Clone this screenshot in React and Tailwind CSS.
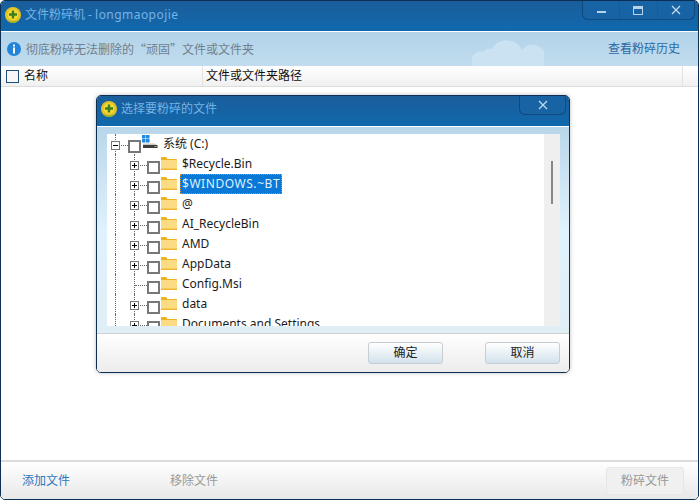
const cjk = "font-['Noto_Sans','Noto_Sans_CJK_SC',sans-serif]";

function Logo() {
  return (
    <svg width="16" height="16" viewBox="0 0 16 16" className="shrink-0">
      <circle cx="8" cy="8" r="8" fill="#e3c22a" />
      <path d="M1 11.5a8 8 0 0 0 14 0a8 6 0 0 1-14 0z" fill="#6fae2c" />
      <circle cx="8" cy="7.5" r="5.4" fill="#f6d92f" />
      <path d="M6.8 3.5h2.4v2.8H12v2.4H9.2v2.8H6.8V8.700H4V6.300h2.800z" fill="#3c7f22" />
    </svg>
  );
}

function Folder() {
  return (
    <svg width="16" height="13" viewBox="0 0 16 13" className="shrink-0">
      <path d="M0 1a1 1 0 0 1 1-1h4l1.500 2H15a1 1 0 0 1 1 1v9a1 1 0 0 1-1 1H1a1 1 0 0 1-1-1z" fill="#efb21c" />
      <rect x="0" y="3" width="16" height="10" rx="1" fill="#fbdc85" />
      <rect x="0" y="11.500" width="16" height="1.500" fill="#eeb72f" />
    </svg>
  );
}

function Drive() {
  return (
    <svg width="16" height="14" viewBox="0 0 16 14" className="shrink-0">
      <rect x="0" y="0" width="3.500" height="3.500" fill="#1e88e5" />
      <rect x="4" y="0" width="3.500" height="3.500" fill="#1e88e5" />
      <rect x="0" y="4" width="3.500" height="3.500" fill="#1e88e5" />
      <rect x="4" y="4" width="3.500" height="3.500" fill="#1e88e5" />
      <path d="M1 8.500h12l2 2H1z" fill="#c9c9c9" />
      <rect x="1" y="10" width="14.500" height="3" fill="#3d3d3d" />
      <rect x="12.500" y="11" width="2" height="1" fill="#7fd05a" />
    </svg>
  );
}

function Expander({ open }) {
  return (
    <span className="relative z-10 w-[9px] h-[9px] border border-[#777] bg-white flex items-center justify-center">
      <span className="absolute w-[5px] h-px bg-black" />
      {!open && <span className="absolute w-px h-[5px] bg-black" />}
    </span>
  );
}

function Check() {
  return <span className="block w-[13px] h-[13px] border-2 border-[#777] bg-white" />;
}

function TreeRow({ name, selected, leaf }) {
  return (
    <div className="relative h-5 flex">
      <span className="absolute left-[8px] top-0 h-5 border-l border-dotted border-[#666]" />
      <span className="absolute left-[27px] top-0 h-5 border-l border-dotted border-[#666]" />
      <span className="absolute left-[28px] top-[11px] w-[12px] border-t border-dotted border-[#666]" />
      <span className="absolute left-[23px] top-[7px]">{!leaf && <Expander />}</span>
      <span className="absolute left-[40px] top-[7px]"><Check /></span>
      <span className="absolute left-[54px] top-[3px]"><Folder /></span>
      <span
        className={`absolute left-[73px] top-0 h-5 px-[2px] leading-5 whitespace-nowrap text-xs ${
          selected ? 'w-[102px] tracking-[0.55px] bg-[#0a78d7] text-[#dff0ff] outline-1 outline-dotted outline-[#e08a1e] -outline-offset-1' : 'text-[#1b1b1b]'
        }`}
      >
        {name}
      </span>
    </div>
  );
}

const rows = [
  { name: '$Recycle.Bin' },
  { name: '$WINDOWS.~BT', selected: true },
  { name: '@' },
  { name: 'AI_RecycleBin' },
  { name: 'AMD' },
  { name: 'AppData' },
  { name: 'Config.Msi', leaf: true },
  { name: 'data' },
  { name: 'Documents and Settings' },
];

function Cloud({ className }) {
  return (
    <svg width="72" height="30" viewBox="0 0 72 30" className={className}>
      <path d="M0 30a10 10 0 0 1 12-14a6 6 0 0 1 8-3a16 14 0 0 1 30 1a12 12 0 0 1 21 16z" fill="#cbe2f2" />
    </svg>
  );
}

export default function App() {
  return (
    <div className={`relative w-[700px] h-[500px] bg-white overflow-hidden ${cjk}`}>
      <div className="w-[699px] h-[500px] border border-[#0d2f52] rounded-[5px] overflow-hidden flex flex-col bg-white">
        <div className="relative h-[30px] shrink-0 flex items-center gap-[4px] pl-[4px] pb-[2px] bg-gradient-to-b from-[#1a5d9a] to-[#0f69ad]">
          <Logo />
          <span className="text-xs text-[#74b3e6] whitespace-pre">文件粉碎机 - <span className="tracking-[0.45px]">longmaopojie</span></span>
          <div className="absolute right-[3px] top-0 w-[113px] h-[19px] flex border border-t-0 border-[#0e4a80] rounded-b-[6px] bg-[#1863a3]">
            <div className="flex-1 flex items-center justify-center border-r border-[#1a5b93]">
              <span className="w-[9px] h-[2px] bg-[#b7d3ea] mt-[3px]" />
            </div>
            <div className="flex-1 flex items-center justify-center border-r border-[#1a5b93]">
              <span className="w-[10px] h-[9px] border border-t-[3px] border-[#b7d3ea]" />
            </div>
            <div className="flex-1 flex items-center justify-center">
              <svg width="10" height="10" viewBox="0 0 10 10"><path d="M1 1l8 8M9 1l-8 8" stroke="#c3dcf0" strokeWidth="1.200" /></svg>
            </div>
          </div>
        </div>
        <div className="relative h-[35px] shrink-0 border-t border-white flex items-center justify-between pl-[6px] pr-[18px] bg-gradient-to-b from-[#b2d3e9] to-[#c1dcee]">
          <Cloud className="absolute left-[471px] top-[4px]" />
          <div className="relative flex items-center gap-[5px]">
            <svg width="14" height="14" viewBox="0 0 14 14" className="shrink-0">
              <circle cx="7" cy="7" r="7" fill="#2184d8" />
              <rect x="6" y="2.500" width="2" height="2" fill="#fff" />
              <rect x="6" y="5.500" width="2" height="6" fill="#fff" />
            </svg>
            <span className="text-xs text-[#6f7f8c]">
              彻底粉碎无法删除的<span className="font-['Noto_Sans_CJK_SC',sans-serif]">“顽固”</span>文件或文件夹
            </span>
          </div>
          <span className="relative text-xs text-[#2a68a6]">查看粉碎历史</span>
        </div>
        <div className="h-[21px] shrink-0 flex items-center bg-gradient-to-b from-white to-[#f0f0f0] border-b border-[#dcdcdc] text-xs text-[#111]">
          <div className="w-[202px] h-full flex items-center gap-[5px] pl-[5px] border-r border-[#e2e2e2]">
            <span className="block w-[13px] h-[13px] border border-[#1f4e79] bg-[#f7f7f7]" />
            <span>名称</span>
          </div>
          <div className="w-[480px] h-full flex items-center pl-[3px] border-r border-[#e2e2e2]">文件或文件夹路径</div>
        </div>
        <div className="flex-1" />
        <div className="h-[39px] shrink-0 flex items-center border-t-2 border-[#dcdcdc] bg-gradient-to-b from-white to-[#e8e8e8] text-xs pl-[21px] pr-[14px]">
          <span className="text-[#2b78c0] w-[148px]">添加文件</span>
          <span className="text-[#999]">移除文件</span>
          <div className="ml-auto w-[78px] h-[28px] flex items-center justify-center bg-[#f0f0f0] border border-[#e6e6e6] rounded-[3px] text-[#999]">粉碎文件</div>
        </div>
      </div>

      <div className="absolute left-[96px] top-[95px] w-[474px] h-[278px] border border-[#0d2f52] rounded-[5px] overflow-hidden flex flex-col shadow-[0_0_4px_rgba(0,0,0,0.25)]">
        <div className="relative h-[30px] shrink-0 flex items-center gap-[4px] pl-[4px] pb-[4px] bg-gradient-to-b from-[#1a5d9a] to-[#0f69ad]">
          <Logo />
          <span className="text-xs text-[#74b3e6]">选择要粉碎的文件</span>
          <div className="absolute right-[3px] top-0 w-[47px] h-[19px] flex items-center justify-center border border-t-0 border-[#0e4a80] rounded-b-[6px] bg-[#1863a3]">
            <svg width="10" height="10" viewBox="0 0 10 10"><path d="M1 1l8 8M9 1l-8 8" stroke="#c3dcf0" strokeWidth="1.200" /></svg>
          </div>
        </div>
        <div className="h-[207px] shrink-0 border-t border-white pt-[7px] pl-[10px] pr-[9px] bg-gradient-to-b from-[#b9d6ea] via-[#dff2fd] to-[#e0eef6]">
          <div className="h-[192px] flex bg-white overflow-hidden">
            <div className="w-[437px] overflow-hidden text-xs">
              <div className="relative h-5">
                <span className="absolute left-[8px] top-0 h-5 border-l border-dotted border-[#666]" />
                <span className="absolute left-[9px] top-[11px] w-[14px] border-t border-dotted border-[#666]" />
                <span className="absolute left-[4px] top-[7px]"><Expander open /></span>
                <span className="absolute left-[21px] top-[6px]"><Check /></span>
                <span className="absolute left-[35px] top-[1px]"><Drive /></span>
                <span className="absolute left-[56px] top-0 leading-5 whitespace-nowrap text-[#1b1b1b]">系统 (C:)</span>
              </div>
              {rows.map(r => <TreeRow key={r.name} {...r} />)}
            </div>
            <div className="w-[16px] bg-[#efefef] pt-[27px] flex justify-center">
              <span className="block w-[2px] h-[43px] bg-[#888]" />
            </div>
          </div>
        </div>
        <div className="flex-1 flex items-center justify-end gap-[42px] pr-[9px] border-t border-[#cfcfcf] bg-gradient-to-b from-white to-[#ececec]">
          <div className="w-[75px] h-[22px] flex items-center justify-center text-xs text-[#222] border border-[#c6ced4] rounded-[3px] bg-gradient-to-b from-white to-[#d3e2ec]">确定</div>
          <div className="w-[75px] h-[22px] flex items-center justify-center text-xs text-[#222] border border-[#c6ced4] rounded-[3px] bg-gradient-to-b from-white to-[#d3e2ec]">取消</div>
        </div>
      </div>
    </div>
  );
}
